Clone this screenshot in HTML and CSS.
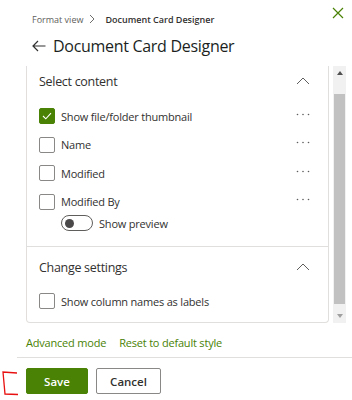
FILE: index.html
```html
<!DOCTYPE html>
<html>
<head>
<meta charset="utf-8">
<link rel="stylesheet" href="styles.css">
</head>
<body>
<div class="panel">
  <div class="crumbs">
    <span class="crumb-muted">Format view</span>
    <svg class="crumb-sep" width="6" height="10" viewBox="0 0 6 10"><path d="M1 1 L5 5 L1 9" fill="none" stroke="#605e5c" stroke-width="0.9"/></svg>
    <span class="crumb-cur">Document Card Designer</span>
    <svg class="close" width="12" height="12" viewBox="0 0 12 12"><path d="M1 1 L11 11 M11 1 L1 11" stroke="#498205" stroke-width="1.2"/></svg>
  </div>
  <div class="title">
    <svg class="back" width="14" height="12" viewBox="0 0 14 12"><path d="M6 1 L1 6 L6 11 M1 6 L13.5 6" fill="none" stroke="#323130" stroke-width="1.2"/></svg>
    <span>Document Card Designer</span>
  </div>

  <div class="scroller">
    <div class="card">
      <div class="sec-head">
        <span>Select content</span>
        <svg class="chev" width="14" height="8" viewBox="0 0 14 8"><path d="M1 7 L7 1 L13 7" fill="none" stroke="#605e5c" stroke-width="1"/></svg>
      </div>
      <div class="row">
        <span class="cb checked"><svg width="10" height="8" viewBox="0 0 10 8"><path d="M1 4 L3.8 6.8 L9 1.2" fill="none" stroke="#fff" stroke-width="1.1"/></svg></span>
        <span class="lbl">Show file/folder thumbnail</span>
        <svg class="dots" width="14" height="3" viewBox="0 0 14 3"><circle cx="1.5" cy="1.5" r="0.8" fill="#605e5c"/><circle cx="7" cy="1.5" r="0.8" fill="#605e5c"/><circle cx="12.5" cy="1.5" r="0.8" fill="#605e5c"/></svg>
      </div>
      <div class="row">
        <span class="cb"></span>
        <span class="lbl">Name</span>
        <svg class="dots" width="14" height="3" viewBox="0 0 14 3"><circle cx="1.5" cy="1.5" r="0.8" fill="#605e5c"/><circle cx="7" cy="1.5" r="0.8" fill="#605e5c"/><circle cx="12.5" cy="1.5" r="0.8" fill="#605e5c"/></svg>
      </div>
      <div class="row">
        <span class="cb"></span>
        <span class="lbl">Modified</span>
        <svg class="dots" width="14" height="3" viewBox="0 0 14 3"><circle cx="1.5" cy="1.5" r="0.8" fill="#605e5c"/><circle cx="7" cy="1.5" r="0.8" fill="#605e5c"/><circle cx="12.5" cy="1.5" r="0.8" fill="#605e5c"/></svg>
      </div>
      <div class="row">
        <span class="cb"></span>
        <span class="lbl">Modified By</span>
        <svg class="dots" width="14" height="3" viewBox="0 0 14 3"><circle cx="1.5" cy="1.5" r="0.8" fill="#605e5c"/><circle cx="7" cy="1.5" r="0.8" fill="#605e5c"/><circle cx="12.5" cy="1.5" r="0.8" fill="#605e5c"/></svg>
      </div>
      <div class="toggle-row">
        <span class="toggle"><span class="knob"></span></span>
        <span class="lbl">Show preview</span>
      </div>
      <div class="divider"></div>
      <div class="sec-head sec2">
        <span>Change settings</span>
        <svg class="chev" width="14" height="8" viewBox="0 0 14 8"><path d="M1 7 L7 1 L13 7" fill="none" stroke="#605e5c" stroke-width="1"/></svg>
      </div>
      <div class="row last">
        <span class="cb"></span>
        <span class="lbl">Show column names as labels</span>
      </div>
    </div>
    <div class="sbar">
      <div class="sbtn"><svg width="6" height="4" viewBox="0 0 6 4"><path d="M0 4 L3 0 L6 4 Z" fill="#505050"/></svg></div>
      <div class="strack"><div class="sthumb"></div></div>
      <div class="sbtn"><svg width="6" height="4" viewBox="0 0 6 4"><path d="M0 0 L3 4 L6 0 Z" fill="#a0a0a0"/></svg></div>
    </div>
  </div>

  <div class="links">
    <a class="link">Advanced mode</a>
    <a class="link">Reset to default style</a>
  </div>
  <div class="footer">
    <svg class="mark" width="20" height="30" viewBox="0 0 20 30"><path d="M17 3 L3 2 Q4 13 5 24 L18 24.5" fill="none" stroke="#e81010" stroke-width="1.3"/></svg>
    <button class="btn primary">Save</button>
    <button class="btn">Cancel</button>
  </div>
</div>
</body>
</html>
```
FILE: styles.css
```css
* { box-sizing: border-box; }
html, body { margin: 0; padding: 0; background: #fff; }
body {
  width: 352px;
  height: 400px;
  overflow: hidden;
  font-family: "Open Sans", "Noto Sans", sans-serif;
  color: #323130;
}
.panel { width: 352px; height: 400px; }

.crumbs {
  display: flex;
  align-items: center;
  height: 14px;
  margin-top: 12px;
  padding-left: 32px;
  font-size: 9px;
  position: relative;
}
.crumb-muted { color: #605e5c; }
.crumb-sep { margin: 0 10px 0 6px; }
.crumb-cur { font-weight: 600; color: #323130; }
.close { position: absolute; right: 8px; top: -5px; }

.title {
  display: flex;
  align-items: center;
  height: 22px;
  margin-top: 9px;
  padding-left: 32px;
  font-size: 16px;
  letter-spacing: -0.3px;
  font-weight: 500;
  color: #201f1e;
}
.back { margin-right: 7px; }

.scroller {
  display: flex;
  margin-top: 9px;
  height: 257px;
  padding-left: 26px;
}
.card {
  width: 303px;
  height: 257px;
  border: 1px solid #e1dfdd;
  border-top: none;
  border-radius: 0 0 4px 4px;
  padding: 0 18px 0 12px;
}
.sec-head {
  display: flex;
  align-items: center;
  justify-content: space-between;
  height: 30px;
  font-size: 12.5px;
  letter-spacing: -0.3px;
  color: #323130;
}
.sec2 { margin-top: 5px; }
.row {
  display: flex;
  align-items: center;
  height: 28.5px;
  font-size: 11px;
  letter-spacing: -0.2px;
}
.row:nth-child(2) { margin-top: 6px; }
.cb {
  width: 16px;
  height: 16px;
  border: 1px solid #8a8886;
  border-radius: 2px;
  display: flex;
  align-items: center;
  justify-content: center;
  flex: none;
}
.cb.checked { background: #498205; border-color: #498205; }
.lbl { margin-left: 6px; flex: 1; }
.dots { margin-top: -4px; margin-right: 0; flex: none; }
.toggle-row {
  display: flex;
  align-items: center;
  height: 14px;
  padding-left: 22px;
  font-size: 11px;
  letter-spacing: -0.2px;
}
.toggle {
  width: 32px;
  height: 16px;
  border: 1px solid #605e5c;
  border-radius: 8px;
  display: flex;
  align-items: center;
  padding-left: 3px;
  flex: none;
}
.knob { width: 9px; height: 9px; border-radius: 50%; background: #4a4848; }
.toggle-row .lbl { margin-left: 6px; }
.divider { height: 1px; background: #e1dfdd; margin: 16px -18px 0 -12px; }
.row.last { margin-top: 5px; }

.sbar {
  width: 13px;
  margin-left: 4px;
  background: #f1f1f1;
  display: flex;
  flex-direction: column;
}
.sbtn { height: 14px; display: flex; align-items: center; justify-content: center; }
.strack { flex: 1; padding: 14px 1px 5px 1px; }
.sthumb { height: 100%; background: #c1c1c1; }

.links {
  display: flex;
  gap: 13px;
  padding-left: 26px;
  margin-top: 12px;
  height: 14px;
  align-items: center;
  font-size: 11px;
  letter-spacing: -0.2px;
}
.link { color: #498205; }
.footer {
  margin-left: 17px;
  margin-top: 8px;
  border-top: 1px solid #e1dfdd;
  padding: 10px 0 0 9px;
  display: flex;
  gap: 8px;
  position: relative;
}
.mark { position: absolute; left: -17px; top: 12px; }
.btn {
  height: 26px;
  padding: 0;
  font-family: inherit;
  font-size: 11.5px;
  font-weight: 600;
  border: 1px solid #8a8886;
  border-radius: 2px;
  background: #fff;
  color: #323130;
  width: 65px;
}
.btn.primary { background: #498205; border-color: #498205; color: #fff; width: 62px; }
```
